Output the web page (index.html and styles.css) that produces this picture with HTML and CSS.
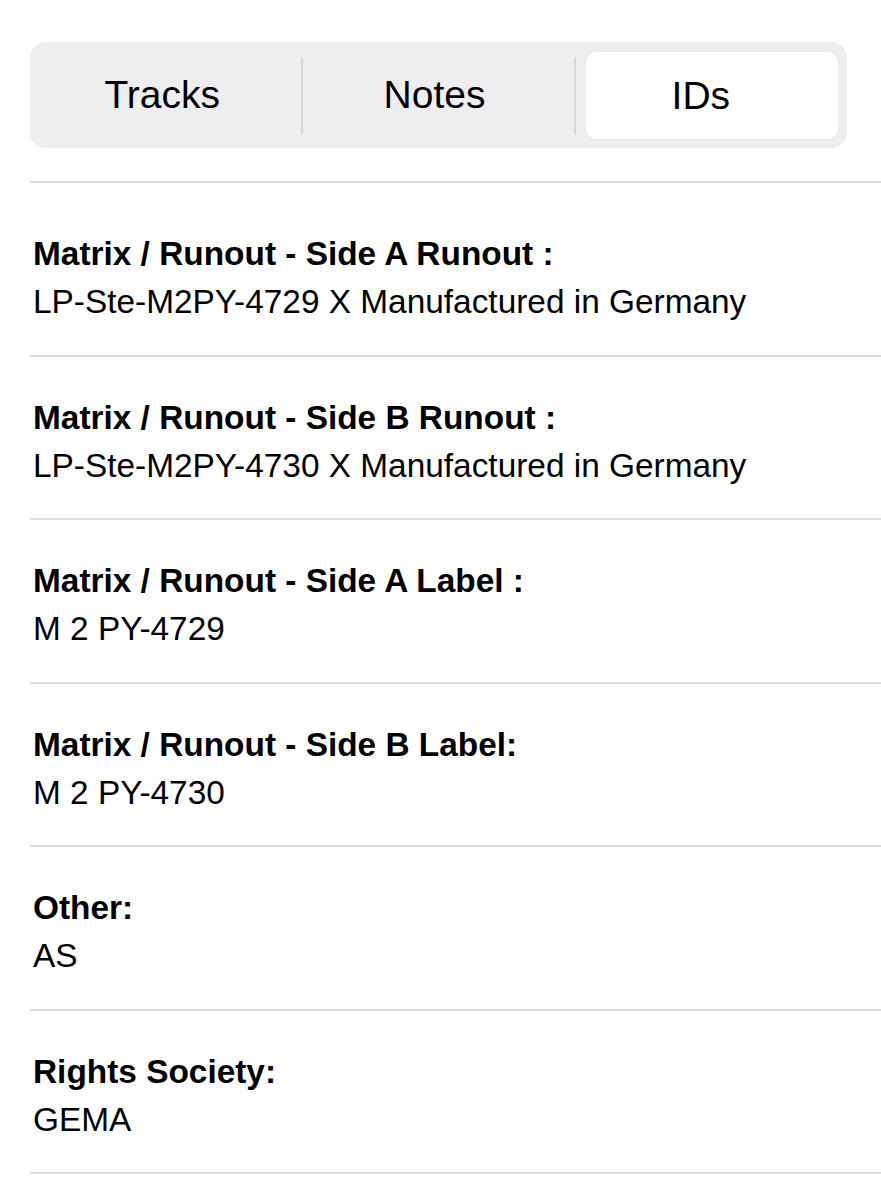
FILE: index.html
```html
<html lang="en">
<head>
  <meta charset="UTF-8">
  <meta name="viewport" content="width=device-width, initial-scale=1.0">
  <title>Release IDs</title>
  <link rel="stylesheet" href="styles.css">
</head>
<body>
  <div class="page">
    <div class="segmented">
      <div class="segment">Tracks</div>
      <div class="segment">Notes</div>
      <div class="segment active">IDs</div>
    </div>

    <div class="id-list">
      <div class="id-row">
        <div class="id-label">Matrix / Runout - Side A Runout :</div>
        <div class="id-value">LP-Ste-M2PY-4729 X Manufactured in Germany</div>
      </div>
      <div class="id-row">
        <div class="id-label">Matrix / Runout - Side B Runout :</div>
        <div class="id-value">LP-Ste-M2PY-4730 X Manufactured in Germany</div>
      </div>
      <div class="id-row">
        <div class="id-label">Matrix / Runout - Side A Label :</div>
        <div class="id-value">M 2 PY-4729</div>
      </div>
      <div class="id-row">
        <div class="id-label">Matrix / Runout - Side B Label:</div>
        <div class="id-value">M 2 PY-4730</div>
      </div>
      <div class="id-row">
        <div class="id-label">Other:</div>
        <div class="id-value">AS</div>
      </div>
      <div class="id-row">
        <div class="id-label">Rights Society:</div>
        <div class="id-value">GEMA</div>
      </div>
    </div>
  </div>
</body>
</html>
```

FILE: styles.css
```css
* {
  box-sizing: border-box;
  margin: 0;
  padding: 0;
}

body {
  font-family: "Liberation Sans", Arial, sans-serif;
  background: #fff;
  color: #000;
}

.page {
  padding: 42px 0 0 30px;
}

.segmented {
  width: 817px;
  height: 106px;
  background: #eeeef0;
  border-radius: 16px;
  display: grid;
  grid-template-columns: repeat(3, 1fr);
}

.segment {
  display: flex;
  align-items: center;
  justify-content: center;
  padding-right: 8px;
  font-size: 39px;
  position: relative;
}

.segment + .segment::before {
  content: "";
  position: absolute;
  left: -1px;
  top: 15px;
  bottom: 13px;
  width: 2px;
  background: #d6d6d9;
}

.segment.active {
  margin: 10px 9px 9px 11px;
  padding-right: 22px;
  background: #fff;
  border-radius: 11px;
  box-shadow: 0 1px 3px rgba(0, 0, 0, 0.04);
}

.segment.active::before {
  left: -12px;
  top: 5px;
  bottom: 4px;
}

.id-list {
  margin-top: 33px;
  border-top: 2px solid #dcdcdc;
}

.id-row {
  padding: 37px 0 28.5px 3px;
  border-bottom: 2px solid #dcdcdc;
}

.id-row:first-child {
  padding-top: 47px;
}

.id-label {
  font-size: 33.4px;
  font-weight: bold;
  line-height: 48px;
}

.id-value {
  font-size: 33.4px;
  line-height: 48px;
}
```
